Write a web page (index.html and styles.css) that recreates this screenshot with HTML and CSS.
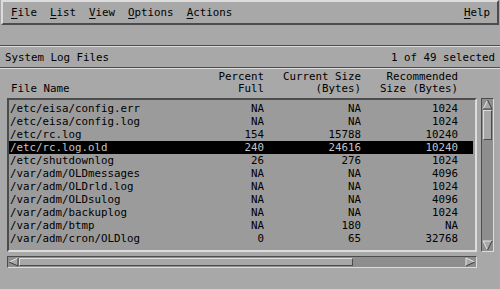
FILE: index.html
```html
<!DOCTYPE html>
<html lang="en">
<head>
    <meta charset="UTF-8">
    <title>System Log Files</title>
    <link rel="stylesheet" href="styles.css">
</head>
<body>
    <!-- Menu bar -->
    <div class="menubar">
        <div class="menus">
            <span><u>F</u>ile</span>
            <span><u>L</u>ist</span>
            <span><u>V</u>iew</span>
            <span><u>O</u>ptions</span>
            <span><u>A</u>ctions</span>
        </div>
        <span><u>H</u>elp</span>
    </div>

    <div class="titlebar">
        <span>System Log Files</span>
        <span>1 of 49 selected</span>
    </div>

    <div class="frame">
        <div class="header cols">
            <div class="name">File Name</div>
            <div class="num">Percent<br>Full</div>
            <div class="num">Current Size<br>(Bytes)</div>
            <div class="num">Recommended<br>Size (Bytes)</div>
        </div>

        <div class="list-row">
            <div class="listbox">
                <div class="row cols"><span>/etc/eisa/config.err</span><span class="num">NA</span><span class="num">NA</span><span class="num">1024</span></div>
                <div class="row cols"><span>/etc/eisa/config.log</span><span class="num">NA</span><span class="num">NA</span><span class="num">1024</span></div>
                <div class="row cols"><span>/etc/rc.log</span><span class="num">154</span><span class="num">15788</span><span class="num">10240</span></div>
                <div class="row cols selected"><span>/etc/rc.log.old</span><span class="num">240</span><span class="num">24616</span><span class="num">10240</span></div>
                <div class="row cols"><span>/etc/shutdownlog</span><span class="num">26</span><span class="num">276</span><span class="num">1024</span></div>
                <div class="row cols"><span>/var/adm/OLDmessages</span><span class="num">NA</span><span class="num">NA</span><span class="num">4096</span></div>
                <div class="row cols"><span>/var/adm/OLDrld.log</span><span class="num">NA</span><span class="num">NA</span><span class="num">1024</span></div>
                <div class="row cols"><span>/var/adm/OLDsulog</span><span class="num">NA</span><span class="num">NA</span><span class="num">4096</span></div>
                <div class="row cols"><span>/var/adm/backuplog</span><span class="num">NA</span><span class="num">NA</span><span class="num">1024</span></div>
                <div class="row cols"><span>/var/adm/btmp</span><span class="num">NA</span><span class="num">180</span><span class="num">NA</span></div>
                <div class="row cols"><span>/var/adm/cron/OLDlog</span><span class="num">0</span><span class="num">65</span><span class="num">32768</span></div>
            </div>

            <!-- vertical scrollbar -->
            <div class="vscroll">
                <svg class="arrow" width="11" height="11" viewBox="0 0 11 11">
                    <polygon points="5.5,1 10,10 1,10" fill="#a8a8a8"/>
                    <line x1="1" y1="10" x2="5.5" y2="1" stroke="#e4e4e4"/>
                    <polyline points="5.5,1 10,10 1,10" fill="none" stroke="#3c3c3c"/>
                </svg>
                <div class="vthumb"></div>
                <div class="trough"></div>
                <svg class="arrow" width="11" height="11" viewBox="0 0 11 11">
                    <polygon points="1,1 10,1 5.5,10" fill="#a8a8a8"/>
                    <polyline points="5.5,10 1,1 10,1" fill="none" stroke="#e4e4e4"/>
                    <line x1="10" y1="1" x2="5.5" y2="10" stroke="#3c3c3c"/>
                </svg>
            </div>
        </div>

        <!-- horizontal scrollbar -->
        <div class="hscroll">
            <svg class="arrow" width="11" height="10" viewBox="0 0 11 10">
                <polygon points="1,5 10,1 10,9" fill="#a8a8a8"/>
                <line x1="1" y1="5" x2="10" y2="1" stroke="#e4e4e4"/>
                <polyline points="10,1 10,9 1,5" fill="none" stroke="#3c3c3c"/>
            </svg>
            <div class="hthumb"></div>
            <div class="trough"></div>
            <svg class="arrow" width="11" height="10" viewBox="0 0 11 10">
                <polygon points="1,1 10,5 1,9" fill="#a8a8a8"/>
                <polyline points="1,9 1,1 10,5" fill="none" stroke="#e4e4e4"/>
                <line x1="10" y1="5" x2="1" y2="9" stroke="#3c3c3c"/>
            </svg>
        </div>
    </div>
</body>
</html>
```

FILE: styles.css
```css
body {
    margin: 0;
    background-color: #a8a8a8;
    font-family: "DejaVu Sans Mono", "Liberation Mono", monospace;
    font-size: 10.8px;
    color: #000;
}
u {
    text-decoration: underline;
    text-underline-offset: 2px;
}
.menubar {
    display: flex;
    justify-content: space-between;
    align-items: center;
    height: 21px;
    margin: 0 1px;
    padding: 0 7px 0 8px;
    border: 2px solid;
    border-color: #dcdcdc #4c4c4c #4c4c4c #dcdcdc;
}
.menus {
    display: flex;
    gap: 13px;
}
.titlebar {
    display: flex;
    justify-content: space-between;
    align-items: center;
    height: 20px;
    margin-top: 20px;
    padding: 1px 5px 0 5px;
    border-top: 1px solid #4c4c4c;
    box-shadow: inset 0 1px 0 #dcdcdc;
}
.frame {
    padding: 3px 0 0 7px;
    border-top: 1px solid #4c4c4c;
    box-shadow: inset 0 1px 0 #dcdcdc;
}
.cols {
    display: grid;
    grid-template-columns: 188px 66px 97px 97px;
}
.num {
    text-align: right;
}
.header {
    line-height: 12px;
    padding-left: 3px;
    margin-bottom: 3px;
}
.header .name {
    align-self: end;
    padding-left: 1px;
}
.list-row {
    display: flex;
    gap: 4px;
}
.listbox {
    box-sizing: border-box;
    width: 470px;
    height: 154px;
    padding-top: 2px;
    border: 2px solid;
    border-color: #4c4c4c #dcdcdc #dcdcdc #4c4c4c;
    background-color: #9b9b9b;
}
.row {
    height: 13px;
    line-height: 13px;
    padding-left: 1px;
    margin-right: 2px;
    white-space: nowrap;
}
.row.selected {
    background-color: #000;
    color: #c4c4c4;
}
.vscroll {
    box-sizing: border-box;
    width: 13px;
    display: flex;
    flex-direction: column;
    border: 1px solid;
    border-color: #4c4c4c #dcdcdc #dcdcdc #4c4c4c;
    background-color: #8e8e8e;
}
.arrow {
    display: block;
    flex: none;
}
.trough {
    flex: 1;
}
.vthumb {
    box-sizing: border-box;
    height: 30px;
    margin: 0 1px;
    border: 1px solid;
    border-color: #dcdcdc #4c4c4c #4c4c4c #dcdcdc;
    background-color: #a8a8a8;
}
.hscroll {
    box-sizing: border-box;
    width: 470px;
    height: 12px;
    margin-top: 4px;
    display: flex;
    border: 1px solid;
    border-color: #4c4c4c #dcdcdc #dcdcdc #4c4c4c;
    background-color: #8e8e8e;
}
.hthumb {
    box-sizing: border-box;
    width: 334px;
    margin: 1px 0;
    border: 1px solid;
    border-color: #dcdcdc #4c4c4c #4c4c4c #dcdcdc;
    background-color: #a8a8a8;
}
```
